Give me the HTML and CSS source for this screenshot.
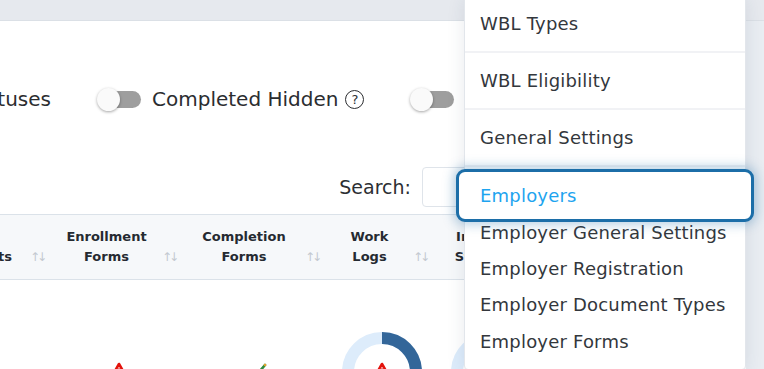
FILE: index.html
```html
<!DOCTYPE html>
<html lang="en">
<head>
  <meta charset="UTF-8">
  <meta name="viewport" content="width=device-width, initial-scale=1.0">
  <title>WBL Placements</title>
  <link rel="stylesheet" href="styles.css">
</head>
<body>
  <div class="topbar"></div>

  <main class="card">
    <!-- Filters -->
    <div class="filters">
      <div class="filter-clip"><span class="filter-label">Show All Statuses</span></div>
      <div class="filter">
        <span class="switch"><span class="track"></span><span class="knob"></span></span>
        <span class="filter-label">Completed Hidden</span>
        <span class="help">?</span>
      </div>
      <div class="filter">
        <span class="switch"><span class="track"></span><span class="knob"></span></span>
        <span class="filter-label">Archived Hidden</span>
      </div>
    </div>

    <!-- Search -->
    <div class="search">
      <label for="searchInput">Search:</label>
      <input type="search" id="searchInput">
    </div>

    <!-- Table header -->
    <div class="thead">
      <div class="th th-first"><span class="th-label">Site<br>Contacts</span><span class="sort">&#8593;&#8595;</span></div>
      <div class="th"><span class="th-label">Enrollment<br>Forms</span><span class="sort">&#8593;&#8595;</span></div>
      <div class="th"><span class="th-label">Completion<br>Forms</span><span class="sort">&#8593;&#8595;</span></div>
      <div class="th"><span class="th-label">Work<br>Logs</span><span class="sort">&#8593;&#8595;</span></div>
      <div class="th"><span class="th-label">Intern<br>Status</span><span class="sort">&#8593;&#8595;</span></div>
      <div class="th"></div>
    </div>

    <!-- First row -->
    <div class="trow">
      <div class="td"></div>
      <div class="td">
        <svg class="icon-warn" width="22" height="20" viewBox="0 0 22 20">
          <path d="M11 2 L20.5 18.5 H1.5 Z" fill="none" stroke="#e3120b" stroke-width="2.6" stroke-linejoin="round"/>
          <path d="M11 7.5 V12.5" stroke="#e3120b" stroke-width="2.4" stroke-linecap="round"/>
          <circle cx="11" cy="15.5" r="1.3" fill="#e3120b"/>
        </svg>
      </div>
      <div class="td">
        <svg class="icon-check" width="20" height="18" viewBox="0 0 20 18">
          <path d="M2 10 L7 15 L18 2" fill="none" stroke="#2e8b3e" stroke-width="2.6" stroke-linecap="round" stroke-linejoin="round"/>
          <circle cx="18" cy="2" r="1.3" fill="#e0a12a"/>
        </svg>
      </div>
      <div class="td">
        <div class="donut">
          <svg width="80" height="80" viewBox="0 0 80 80">
            <circle cx="40" cy="40" r="34" fill="none" stroke="#ddecfb" stroke-width="12"/>
            <circle cx="40" cy="40" r="34" fill="none" stroke="#336699" stroke-width="12"
                    stroke-dasharray="75 214" transform="rotate(-90 40 40)"/>
          </svg>
          <svg class="donut-icon" width="22" height="20" viewBox="0 0 22 20">
            <path d="M11 2 L20.5 18.5 H1.5 Z" fill="none" stroke="#e3120b" stroke-width="2.6" stroke-linejoin="round"/>
            <path d="M11 7.5 V12.5" stroke="#e3120b" stroke-width="2.4" stroke-linecap="round"/>
          </svg>
        </div>
      </div>
      <div class="td">
        <div class="donut">
          <svg width="80" height="80" viewBox="0 0 80 80">
            <circle cx="40" cy="40" r="34" fill="none" stroke="#ddecfb" stroke-width="12"/>
          </svg>
        </div>
      </div>
      <div class="td"></div>
    </div>
  </main>

  <!-- Settings dropdown -->
  <nav class="menu">
    <a class="menu-item">WBL Types</a>
    <a class="menu-item">WBL Eligibility</a>
    <a class="menu-item">General Settings</a>
    <div class="submenu">
      <a class="menu-item compact active">Employers</a>
      <a class="menu-item compact">Employer General Settings</a>
      <a class="menu-item compact">Employer Registration</a>
      <a class="menu-item compact">Employer Document Types</a>
      <a class="menu-item compact">Employer Forms</a>
    </div>
  </nav>
</body>
</html>
```

FILE: styles.css
```css
body {
  font-family: 'DejaVu Sans', sans-serif;
  background: #e9edf2;
  color: #2c2f33;
  margin: 0;
  width: 764px;
  height: 369px;
  overflow: hidden;
  position: relative;
}
.topbar {
  height: 20px;
  background: #e6e9ee;
  border-bottom: 1px solid #dbe0e6;
}
.card {
  background: white;
  width: 746px;
  height: 348px;
  box-sizing: border-box;
  padding-top: 63px;
  padding-right: 24px;
  overflow: hidden;
}

/* Filters */
.filters {
  display: flex;
  align-items: center;
  gap: 46px;
  height: 30px;
  white-space: nowrap;
}
.filter-clip {
  width: 51px;
  display: flex;
  justify-content: flex-end;
  overflow: hidden;
}
.filter {
  display: flex;
  align-items: center;
}
.filter-label {
  font-size: 20px;
  color: #2b2d30;
}
.switch {
  position: relative;
  width: 44px;
  height: 23px;
  display: flex;
  align-items: center;
  margin-right: 11px;
  flex: none;
}
.track {
  width: 36px;
  height: 17px;
  margin-left: 8px;
  border-radius: 9px;
  background: #9e9e9e;
}
.knob {
  position: absolute;
  left: 0;
  top: 0;
  width: 23px;
  height: 23px;
  border-radius: 50%;
  background: #fafafa;
  box-shadow: 0 1px 3px rgba(0, 0, 0, 0.35);
}
.help {
  width: 17px;
  height: 17px;
  margin-left: 7px;
  border: 1.5px solid #2b2d30;
  border-radius: 50%;
  font-size: 13px;
  line-height: 17px;
  text-align: center;
}

/* Search */
.search {
  display: flex;
  justify-content: flex-end;
  align-items: center;
  margin-top: 53px;
}
.search label {
  font-size: 19px;
  color: #2c2f33;
  margin-right: 11px;
}
.search input {
  width: 300px;
  height: 40px;
  box-sizing: border-box;
  border: 1px solid #dfe4ea;
  border-radius: 4px;
}

/* Table */
.thead, .trow {
  display: grid;
  grid-template-columns: 53px 132px 143px 108px 110px 1fr;
}
.thead {
  margin-top: 7px;
  width: 746px;
  background: #f6f8fa;
  border-top: 1px solid #dbe2e9;
  border-bottom: 1px solid #dbe2e9;
  padding: 12px 0;
}
.th {
  display: flex;
  align-items: flex-end;
  padding: 0 10px 0 8px;
  font-size: 13px;
  font-weight: bold;
  line-height: 20px;
  color: #252a31;
  white-space: nowrap;
}
.th-label {
  flex: 1;
  text-align: center;
}
.th-first {
  justify-content: flex-end;
  overflow: hidden;
  padding-left: 0;
}
.th-first .th-label {
  flex: none;
  margin-right: 8px;
}
.sort {
  width: 13px;
  margin-left: 10px;
  font-size: 12px;
  font-weight: normal;
  letter-spacing: -3px;
  color: #c3c9d0;
}
.trow {
  padding-top: 52px;
  width: 746px;
}
.td {
  height: 80px;
  display: flex;
  justify-content: center;
  align-items: center;
}
.donut {
  position: relative;
  width: 80px;
  height: 80px;
}
.donut-icon {
  position: absolute;
  left: 29px;
  top: 30px;
}

/* Dropdown */
.menu {
  position: absolute;
  top: -5px;
  left: 464px;
  width: 282px;
  box-sizing: border-box;
  background: white;
  border: 1px solid #e2e6eb;
  border-radius: 0 0 4px 4px;
  box-shadow: 0 4px 18px rgba(40, 60, 90, 0.1);
  padding-bottom: 9px;
}
.menu-item {
  display: block;
  padding: 14px 15px;
  line-height: 27px;
  font-size: 18px;
  letter-spacing: 0.2px;
  color: #33373c;
  border-bottom: 2px solid #f1f2f5;
  white-space: nowrap;
}
.submenu {
  padding-top: 11px;
}
.menu-item.compact {
  padding: 4.2px 15px;
  line-height: 28px;
  border-bottom: none;
}
.menu-item.active {
  position: relative;
  z-index: 1;
  color: #1ea4ef;
}
.menu-item.active::before {
  content: '';
  position: absolute;
  top: -9px;
  bottom: -8px;
  left: -9px;
  right: -9px;
  z-index: -1;
  background: white;
  border: 3px solid #1c6ea8;
  border-radius: 9px;
  box-shadow: 0 0 12px 2px rgba(30, 110, 170, 0.35);
}
```
